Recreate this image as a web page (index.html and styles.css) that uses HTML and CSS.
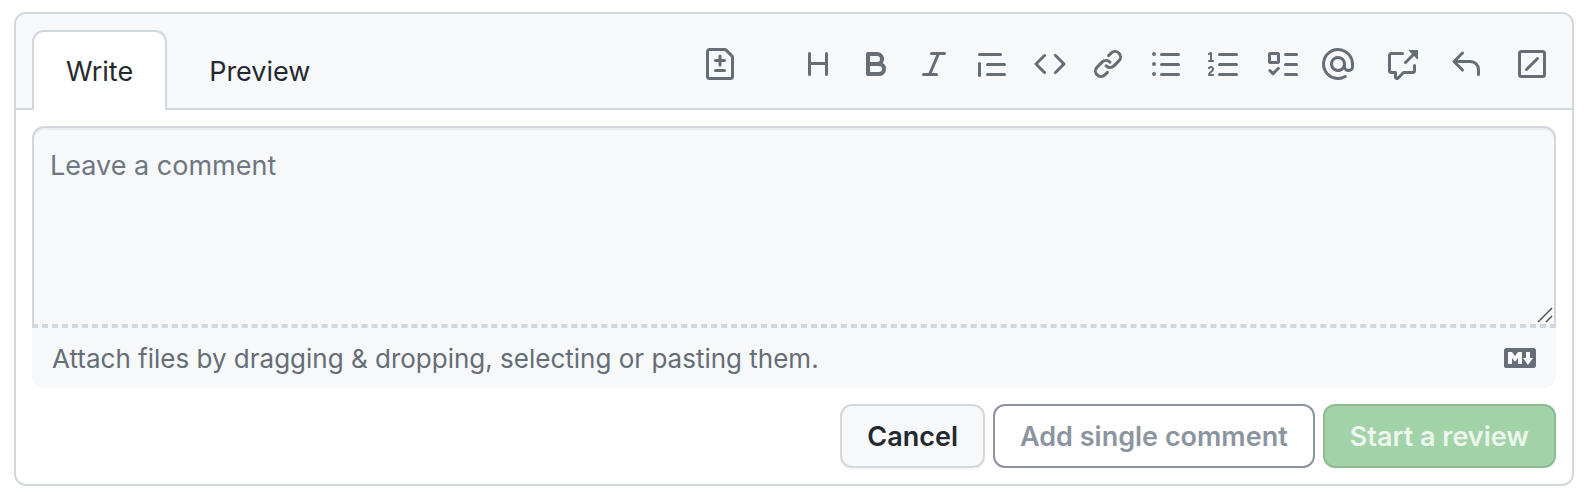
FILE: index.html
```html
<!DOCTYPE html>
<html lang="en">
<head>
<meta charset="utf-8">
<title>Review comment</title>
<link rel="stylesheet" href="styles.css">
</head>
<body>
<form class="comment-box">
  <header class="head">
    <div class="tabs" role="tablist">
      <button class="tab tab-active" type="button" role="tab" aria-selected="true">Write</button>
      <button class="tab" type="button" role="tab" aria-selected="false">Preview</button>
    </div>
    <div class="toolbar" role="toolbar" aria-label="Formatting">
      <button class="tool tool-suggest" type="button" aria-label="Add a suggestion"><svg class="icon" viewBox="0 0 16 16"><path fill-rule="evenodd" d="M2.75 1.5a.25.25 0 00-.25.25v12.5c0 .138.112.25.25.25h10.5a.25.25 0 00.25-.25V4.664a.25.25 0 00-.073-.177l-2.914-2.914a.25.25 0 00-.177-.073H2.75zM1 1.75C1 .784 1.784 0 2.75 0h7.586c.464 0 .909.184 1.237.513l2.914 2.914c.329.328.513.773.513 1.237v9.586A1.75 1.75 0 0113.25 16H2.75A1.75 1.75 0 011 14.25V1.75zm7 1.5a.75.75 0 01.75.75v1.5h1.5a.75.75 0 010 1.5h-1.5v1.5a.75.75 0 01-1.5 0V7h-1.5a.75.75 0 010-1.5h1.5V4A.75.75 0 018 3.25zm-3 8a.75.75 0 01.75-.75h4.5a.75.75 0 010 1.5h-4.5a.75.75 0 01-.75-.75z"/></svg></button>
      <div class="tool-group">
        <button class="tool" type="button" aria-label="Heading"><svg class="icon" viewBox="0 0 16 16"><path d="M3.75 2a.75.75 0 01.75.75V7h7V2.75a.75.75 0 011.5 0v10.5a.75.75 0 01-1.5 0V8.5h-7v4.75a.75.75 0 01-1.5 0V2.75A.75.75 0 013.75 2z"/></svg></button>
        <button class="tool" type="button" aria-label="Bold"><svg class="icon" viewBox="0 0 16 16"><path fill-rule="evenodd" d="M4 2a1 1 0 00-1 1v10a1 1 0 001 1h5.5a3.5 3.5 0 001.852-6.47A3.5 3.5 0 008.5 2H4zm4.5 5a1.5 1.5 0 100-3H5v3h3.5zM5 9v3h4.5a1.5 1.5 0 000-3H5z"/></svg></button>
        <button class="tool" type="button" aria-label="Italic"><svg class="icon" viewBox="0 0 16 16"><path d="M6 2.75A.75.75 0 016.75 2h6.5a.75.75 0 010 1.5h-2.505l-3.858 9H9.25a.75.75 0 010 1.5h-6.5a.75.75 0 010-1.5h2.505l3.858-9H6.75A.75.75 0 016 2.75z"/></svg></button>
        <button class="tool" type="button" aria-label="Quote"><svg class="icon" viewBox="0 0 16 16"><path d="M1.75 2.5a.75.75 0 000 1.5h10.5a.75.75 0 000-1.5H1.75zm4 5a.75.75 0 000 1.5h8.5a.75.75 0 000-1.5h-8.5zm0 5a.75.75 0 000 1.5h8.5a.75.75 0 000-1.5h-8.5zM2.5 7.75a.75.75 0 00-1.5 0v6a.75.75 0 001.5 0v-6z"/></svg></button>
        <button class="tool" type="button" aria-label="Code"><svg class="icon" viewBox="0 0 16 16"><path d="M4.72 3.22a.75.75 0 011.06 1.06L2.06 8l3.72 3.72a.75.75 0 11-1.06 1.06L.47 8.53a.75.75 0 010-1.06l4.25-4.25zm6.56 0a.75.75 0 10-1.06 1.06L13.94 8l-3.72 3.72a.75.75 0 101.06 1.06l4.25-4.25a.75.75 0 000-1.06l-4.25-4.25z"/></svg></button>
        <button class="tool" type="button" aria-label="Link"><svg class="icon" viewBox="0 0 16 16"><path d="M7.775 3.275a.75.75 0 001.06 1.06l1.25-1.25a2 2 0 112.83 2.83l-2.5 2.5a2 2 0 01-2.83 0 .75.75 0 00-1.06 1.06 3.5 3.5 0 004.95 0l2.5-2.5a3.5 3.5 0 00-4.95-4.95l-1.25 1.25zm-4.69 9.64a2 2 0 010-2.83l2.5-2.5a2 2 0 012.83 0 .75.75 0 001.06-1.06 3.5 3.5 0 00-4.95 0l-2.5 2.5a3.5 3.5 0 004.95 4.95l1.25-1.25a.75.75 0 00-1.06-1.06l-1.25 1.25a2 2 0 01-2.83 0z"/></svg></button>
        <button class="tool" type="button" aria-label="Bulleted list"><svg class="icon" viewBox="0 0 16 16"><path d="M2 4a1 1 0 100-2 1 1 0 000 2zm3.75-1.5a.75.75 0 000 1.5h8.5a.75.75 0 000-1.5h-8.5zm0 5a.75.75 0 000 1.5h8.5a.75.75 0 000-1.5h-8.5zm0 5a.75.75 0 000 1.5h8.5a.75.75 0 000-1.5h-8.5zM3 8a1 1 0 11-2 0 1 1 0 012 0zm-1 6a1 1 0 100-2 1 1 0 000 2z"/></svg></button>
        <button class="tool" type="button" aria-label="Numbered list"><svg class="icon" viewBox="0 0 16 16"><path d="M2.003 2.5a.5.5 0 00-.723-.447l-1.003.5a.5.5 0 00.446.895l.28-.14V6H.5a.5.5 0 000 1h2.006a.5.5 0 100-1h-.503V2.5zM5 3.25a.75.75 0 01.75-.75h8.5a.75.75 0 010 1.5h-8.5A.75.75 0 015 3.25zm0 5a.75.75 0 01.75-.75h8.5a.75.75 0 010 1.5h-8.5A.75.75 0 015 8.25zm0 5a.75.75 0 01.75-.75h8.5a.75.75 0 010 1.5h-8.5a.75.75 0 01-.75-.75zM.924 10.32l.003-.004a.851.851 0 01.144-.153A.66.66 0 011.5 10c.195 0 .306.068.374.146a.57.57 0 01.128.376c0 .453-.269.682-.8 1.078l-.035.025C.692 11.98 0 12.495 0 13.5a.5.5 0 00.5.5h2.003a.5.5 0 000-1H1.146c.132-.197.351-.372.654-.597l.047-.035c.47-.35 1.156-.858 1.156-1.845 0-.365-.118-.744-.377-1.038-.268-.303-.658-.484-1.126-.484-.48 0-.84.202-1.068.392a1.858 1.858 0 00-.348.384l-.01.018a.5.5 0 00.851.525z"/></svg></button>
        <button class="tool" type="button" aria-label="Task list"><svg class="icon icon-line" viewBox="0 0 16 16"><rect x="1.75" y="2.75" width="4.5" height="4.5" rx=".3"/><path d="M1.95 11.35l1.55 1.5 2.7-2.7M9.75 3.25h5.5M9.75 8.25h5.5M9.75 13.25h5.5"/></svg></button>
      </div>
      <div class="tool-group tool-group-wide">
        <button class="tool" type="button" aria-label="Mention"><svg class="icon" viewBox="0 0 16 16"><path fill-rule="evenodd" d="M4.75 2.37a6.5 6.5 0 006.5 11.26.75.75 0 01.75 1.298 8 8 0 113.994-7.273.754.754 0 01.006.095v1.5a2.75 2.75 0 01-5.072 1.475A4 4 0 1112 8v1.25a1.25 1.25 0 002.5 0V7.867a6.5 6.5 0 00-9.75-5.496V2.37zM10.5 8a2.5 2.5 0 10-5 0 2.5 2.5 0 005 0z"/></svg></button>
        <button class="tool" type="button" aria-label="Reference"><svg class="icon" viewBox="0 0 16 16"><path d="M16 1.25v4.146a.25.25 0 01-.427.177L14.03 4.03l-3.75 3.75a.75.75 0 11-1.06-1.06l3.75-3.75-1.543-1.543A.25.25 0 0111.604 1h4.146a.25.25 0 01.25.25zM2.75 3.5a.25.25 0 00-.25.25v7.5c0 .138.112.25.25.25h2a.75.75 0 01.75.75v2.19l2.72-2.72a.75.75 0 01.53-.22h4.5a.25.25 0 00.25-.25v-2.5a.75.75 0 011.5 0v2.5A1.75 1.75 0 0113.25 13H9.06l-2.573 2.573A1.457 1.457 0 014 14.543V13H2.75A1.75 1.75 0 011 11.25v-7.5C1 2.784 1.784 2 2.75 2h5.5a.75.75 0 010 1.5h-5.5z"/></svg></button>
        <button class="tool" type="button" aria-label="Saved replies"><svg class="icon" viewBox="0 0 16 16"><path d="M6.78 1.97a.75.75 0 010 1.06L3.81 6h6.44A4.75 4.75 0 0115 10.75v2.5a.75.75 0 01-1.5 0v-2.5a3.25 3.25 0 00-3.25-3.25H3.81l2.97 2.97a.75.75 0 11-1.06 1.06L1.47 7.28a.75.75 0 010-1.06l4.25-4.25a.75.75 0 011.06 0z"/></svg></button>
      </div>
      <button class="tool tool-slash" type="button" aria-label="Slash commands"><svg class="icon icon-line" viewBox="0 0 16 16"><rect x="1.75" y="1.75" width="12.5" height="12.5" rx="1"/><path d="M5.25 10.75l5.5-5.5"/></svg></button>
    </div>
  </header>
  <div class="body">
    <div class="editor">
      <textarea class="field" placeholder="Leave a comment" aria-label="Leave a comment"></textarea>
      <svg class="grip" viewBox="0 0 16 16" aria-hidden="true"><path d="M1 15L15 1M9 15l6-6"/></svg>
    </div>
    <div class="attach">
      <label class="attach-label" for="files">Attach files by dragging &amp; dropping, selecting or pasting them.</label>
      <input class="attach-input" id="files" type="file" multiple>
      <a class="markdown" href="#" aria-label="Styling with Markdown is supported"><svg class="icon" viewBox="0 0 16 16"><path fill-rule="evenodd" d="M14.85 3H1.15C.52 3 0 3.52 0 4.15v7.69C0 12.48.52 13 1.15 13h13.69c.64 0 1.15-.52 1.15-1.15v-7.7C16 3.52 15.48 3 14.85 3zM9 11H7V8L5.5 9.92 4 8v3H2V5h2l1.5 2L7 5h2v6zm2.99.5L9.5 8H11V5h2v3h1.5l-2.51 3.5z"/></svg></a>
    </div>
    <div class="actions">
      <button class="btn btn-cancel" type="button">Cancel</button>
      <button class="btn btn-outline" type="submit" disabled>Add single comment</button>
      <button class="btn btn-primary" type="submit" disabled>Start a review</button>
    </div>
  </div>
</form>
</body>
</html>
```
FILE: styles.css
```css
* { box-sizing: border-box; }

body {
  margin: 0;
  padding: 12px 16px 12px 14px;
  background: #fff;
  color: #24292f;
  font-family: Inter, "Noto Sans", sans-serif;
  font-size: 27px;
}

button, textarea { font: inherit; color: inherit; }
button { margin: 0; padding: 0; border: 0; background: none; }

.comment-box {
  border: 2px solid #d0d7de;
  border-radius: 12px;
}

.head {
  display: flex;
  justify-content: space-between;
  padding: 16px 24px 0 16px;
  background: #f6f8fa;
  border-bottom: 2px solid #d0d7de;
  border-radius: 10px 10px 0 0;
}

.tabs { display: flex; gap: 8px; margin-bottom: -2px; }

.tab {
  height: 80px;
  padding: 0 32px;
  border: 2px solid transparent;
  border-bottom: 0;
  border-radius: 12px 12px 0 0;
}

.tab-active { background: #fff; border-color: #d0d7de; }

.toolbar { display: flex; align-items: flex-start; padding-top: 18px; }
.tool { display: flex; color: #656d76; }
.tool-group { display: flex; gap: 26px; }
.tool-group-wide { gap: 32px; margin-left: 24px; }
.tool-suggest { margin-right: 66px; }
.tool-slash { margin-left: 34px; }

.icon { display: block; width: 32px; height: 32px; fill: currentColor; }

.icon-line {
  fill: none;
  stroke: currentColor;
  stroke-width: 1.5;
  stroke-linecap: round;
  stroke-linejoin: round;
}

.body { padding: 16px; }
.editor { position: relative; }

.field {
  display: block;
  width: 100%;
  height: 200px;
  padding: 16px;
  line-height: 44px;
  background: #f6f8fa;
  border: 2px solid #d0d7de;
  border-bottom-style: dashed;
  border-radius: 12px 12px 0 0;
  box-shadow: inset 0 2px 0 rgba(208, 215, 222, .3);
  resize: none;
  outline: 0;
}

.field::placeholder { color: #6e7781; opacity: 1; }

.grip {
  position: absolute;
  right: 3px;
  bottom: 3px;
  width: 16px;
  height: 16px;
  fill: none;
  stroke: #555;
  stroke-width: 1.5;
}

.attach {
  display: flex;
  align-items: center;
  justify-content: space-between;
  height: 62px;
  padding: 0 20px;
  background: #f6f8fa;
  border-top: 2px dashed #d0d7de;
  border-radius: 0 0 12px 12px;
  color: #656d76;
  font-size: 26px;
}

.attach-input { display: none; }
.markdown { color: inherit; }

.actions {
  display: flex;
  justify-content: flex-end;
  gap: 8px;
  margin-top: 16px;
}

.btn {
  height: 64px;
  padding: 0 25px;
  border: 2px solid;
  border-radius: 12px;
  font-weight: 600;
}

.btn-cancel {
  background: #f6f8fa;
  border-color: #d5d8da;
  box-shadow: 0 2px 0 rgba(27, 31, 36, .04);
}

.btn-outline { border-color: #8c92a0; color: #8c959f; }
.btn-primary { background: #a2d2a7; border-color: #8fbb94; color: #ecf6ed; }
```
